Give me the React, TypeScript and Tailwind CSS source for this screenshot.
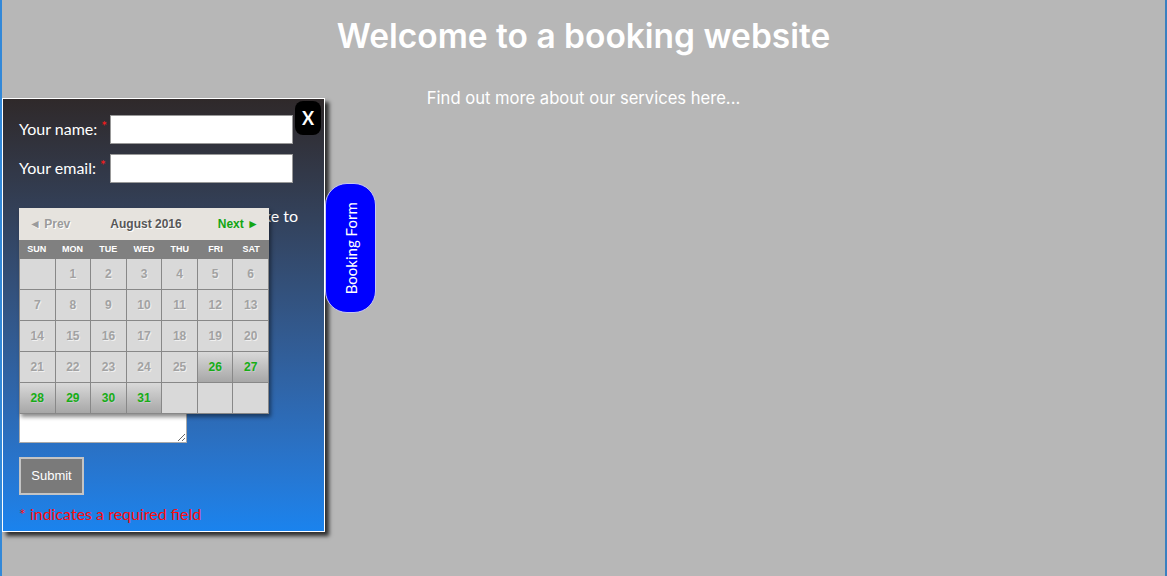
import React from 'react';

const dayNames = ['SUN', 'MON', 'TUE', 'WED', 'THU', 'FRI', 'SAT'];

// August 2016 starts on a Monday; 26th onwards are bookable
const cells: (number | null)[] = [
  null, 1, 2, 3, 4, 5, 6,
  7, 8, 9, 10, 11, 12, 13,
  14, 15, 16, 17, 18, 19, 20,
  21, 22, 23, 24, 25, 26, 27,
  28, 29, 30, 31, null, null, null,
];

function Calendar() {
  return (
    <div className="absolute left-[16px] top-[109px] w-[250px] shadow-[2px_3px_4px_rgba(0,0,0,0.45)] font-['Liberation_Sans',Arial,sans-serif]">
      <div className="h-[32px] flex items-center justify-between px-[10px] bg-[#e6e3de] text-[12px] font-bold">
        <span className="text-[#9b9b9b] [text-shadow:1px_1px_0_#fff]">◄ Prev</span>
        <span className="text-[#585858] pl-[4px] [text-shadow:1px_1px_0_#fff]">August 2016</span>
        <span className="text-[#13a613]">Next ►</span>
      </div>
      <div className="grid grid-cols-7 h-[19px] bg-[#808080] text-white text-[9px] font-bold items-center text-center">
        {dayNames.map((d) => (
          <span key={d}>{d}</span>
        ))}
      </div>
      <div className="grid grid-cols-7 gap-px bg-[#888888] p-px pt-0">
        {cells.map((n, i) => {
          const open = n !== null && n >= 26;
          return (
            <div
              key={i}
              className={
                open
                  ? 'h-[30px] flex items-center justify-center text-[12px] font-bold text-[#16ad16] bg-gradient-to-b from-[#d9d9d9] to-[#a7a7a7] [text-shadow:1px_1px_0_#c8c8c8]'
                  : 'h-[30px] flex items-center justify-center text-[12px] font-bold text-[#a2a2a2] bg-[#d9d9d9] [text-shadow:1px_1px_0_#f0f0f0]'
              }
            >
              {n}
            </div>
          );
        })}
      </div>
    </div>
  );
}

function Required() {
  return <span className="relative -top-[4px] ml-[4px] text-[14px] leading-none text-[#ff1a1a]">*</span>;
}

function BookingPanel() {
  return (
    <div className="absolute left-0 top-[98px] w-[323px] h-[434px] border border-white bg-gradient-to-b from-[#2f292a] to-[#1a83ee] shadow-[4px_4px_4px_rgba(0,0,0,0.75)] font-['Lato',sans-serif] text-white">
      <div className="pl-[16px] pt-[16px]">
        <div className="flex items-center">
          <label className="w-[91px] text-[16px] leading-[20px] whitespace-nowrap -mt-[2px]">
            Your name:<Required />
          </label>
          <input className="w-[183px] h-[29px] bg-white border border-[#999]" />
        </div>
        <div className="flex items-center mt-[10px]">
          <label className="w-[91px] text-[16px] leading-[20px] whitespace-nowrap -mt-[2px]">
            Your email:<Required />
          </label>
          <input className="w-[183px] h-[29px] bg-white border border-[#999]" />
        </div>
        <p className="mt-[23px] w-[279px] text-[16px] leading-[19px]">
          <span className="block text-right">Select the date you would like to</span>
          <span className="block">book:</span>
        </p>
        <input className="mt-[8px] w-[168px] h-[28px] bg-white border border-[#999]" />
        <textarea className="block mt-[10px] w-[168px] h-[153px] bg-white border border-[#aaa]" />
        <button className="mt-[14px] w-[65px] h-[38px] bg-[#7a7a7a] border-2 border-[#c4c4c4] text-white text-[13px] font-['Liberation_Sans',Arial,sans-serif]">
          Submit
        </button>
        <p className="mt-[7px] text-[16px] text-[#ff0d0d]">* indicates a required field</p>
      </div>

      <Calendar />

      <button className="absolute left-[292px] top-[2px] w-[26px] h-[34px] rounded-[8px] bg-black text-white text-[18px] font-bold flex items-center justify-center">
        X
      </button>

      <div className="absolute left-[322px] top-[84px] w-[51px] h-[130px] rounded-[22px] bg-[#0000ff] border border-[#c8c8f0] flex items-center justify-center">
        <span className="-rotate-90 whitespace-nowrap text-[15px]">Booking Form</span>
      </div>
    </div>
  );
}

export default function App() {
  return (
    <div className="relative min-h-screen h-[576px] bg-[#b7b7b7] border-l-2 border-l-[#3288d8] border-r-2 border-r-[#3a80c0] overflow-hidden">
      <header className="text-center text-white font-['Inter',sans-serif]">
        <h1 className="pt-[14px] text-[33.5px] leading-[44px] font-semibold">Welcome to a booking website</h1>
        <p className="mt-[28px] text-[16.6px]">Find out more about our services here...</p>
      </header>
      <BookingPanel />
    </div>
  );
}
